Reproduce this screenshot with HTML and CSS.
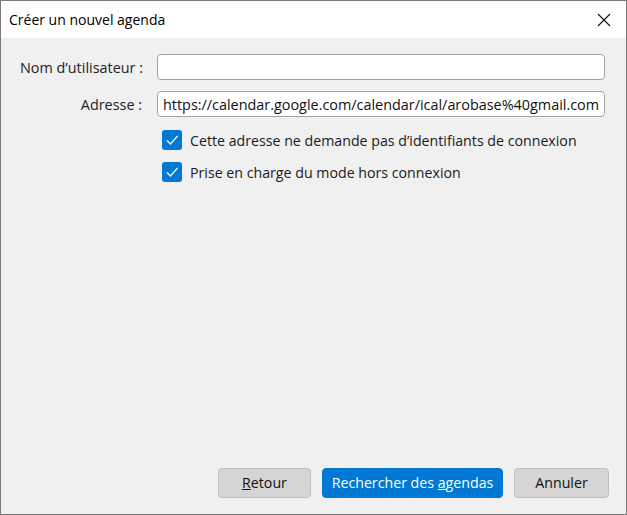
FILE: index.html
```html
<!DOCTYPE html>
<html lang="fr">
<head>
    <meta charset="UTF-8">
    <title>Créer un nouvel agenda</title>
    <link rel="stylesheet" href="styles.css">
</head>
<body>

    <div class="window">
        <div class="titlebar">
            <span class="title">Créer un nouvel agenda</span>
            <svg class="close" width="14" height="14" viewBox="0 0 14 14">
                <path d="M1 1 L13 13 M13 1 L1 13" stroke="#111" stroke-width="1.1" fill="none"/>
            </svg>
        </div>

        <div class="content">
            <form class="fields">
                <label for="username">Nom d’utilisateur :</label>
                <input type="text" id="username" name="username">

                <label for="address">Adresse :</label>
                <input type="text" id="address" name="address" value="https://calendar.google.com/calendar/ical/arobase%40gmail.com">

                <div class="checks">
                    <label class="check">
                        <span class="box">
                            <svg width="14" height="14" viewBox="0 0 14 14"><path d="M2 7.5 L5.5 11 L12.5 3" stroke="#fff" stroke-width="1.2" fill="none"/></svg>
                        </span>
                        Cette adresse ne demande pas d’identifiants de connexion
                    </label>
                    <label class="check">
                        <span class="box">
                            <svg width="14" height="14" viewBox="0 0 14 14"><path d="M2 7.5 L5.5 11 L12.5 3" stroke="#fff" stroke-width="1.2" fill="none"/></svg>
                        </span>
                        Prise en charge du mode hors connexion
                    </label>
                </div>
            </form>

            <div class="btn-container">
                <button type="button" class="back"><u>R</u>etour</button>
                <button type="button" class="search">Rechercher des <u>a</u>gendas</button>
                <button type="button" class="cancel">Annuler</button>
            </div>
        </div>
    </div>

</body>
</html>
```

FILE: styles.css
```css
html, body {
    margin: 0;
    padding: 0;
}
body {
    font-family: "Open Sans", "Noto Sans", sans-serif;
    font-size: 14.2px;
    color: #1a1a1a;
    background-color: #3a3a3a;
}
.window {
    box-sizing: border-box;
    width: 627px;
    height: 515px;
    border: 1px solid #7a7a7a;
    background: #f0f0f0;
    display: flex;
    flex-direction: column;
}
.titlebar {
    height: 37px;
    background: white;
    display: flex;
    align-items: center;
    justify-content: space-between;
    padding: 0 15px 0 8px;
}
.title {
    font-size: 14px;
    color: #000;
}
.content {
    flex: 1;
    display: flex;
    flex-direction: column;
    justify-content: space-between;
    padding: 16px 17px 16px 19px;
}
.fields {
    display: grid;
    grid-template-columns: 122px 1fr;
    column-gap: 15px;
    row-gap: 11px;
    align-items: center;
    margin-right: 4px;
}
.fields > label {
    text-align: right;
    white-space: nowrap;
    font-size: 14.4px;
    color: #222;
}
input {
    box-sizing: border-box;
    height: 26px;
    padding: 0 5px;
    border: 1px solid #a3a3a3;
    border-radius: 4px;
    background: white;
    font-family: inherit;
    font-size: 14.4px;
    color: #111;
}
.checks {
    grid-column: 2;
    display: flex;
    flex-direction: column;
    gap: 12px;
    padding-left: 5px;
    margin-top: 2px;
}
.check {
    display: flex;
    align-items: center;
    gap: 8px;
}
.box {
    width: 20px;
    height: 20px;
    border-radius: 3px;
    background: #0078d4;
    display: flex;
    align-items: center;
    justify-content: center;
}
.btn-container {
    display: flex;
    justify-content: flex-end;
    gap: 11px;
}
button {
    box-sizing: border-box;
    height: 30px;
    padding: 0 0 2px;
    white-space: nowrap;
    border: 1px solid #bdbdbd;
    border-radius: 4px;
    font-family: inherit;
    font-size: 14.2px;
    color: #111;
    background-color: #d5d5d5;
}
.back {
    width: 93px;
}
.search {
    width: 181px;
    background-color: #0078d4;
    border-color: #0078d4;
    color: white;
}
.cancel {
    width: 95px;
}
```
